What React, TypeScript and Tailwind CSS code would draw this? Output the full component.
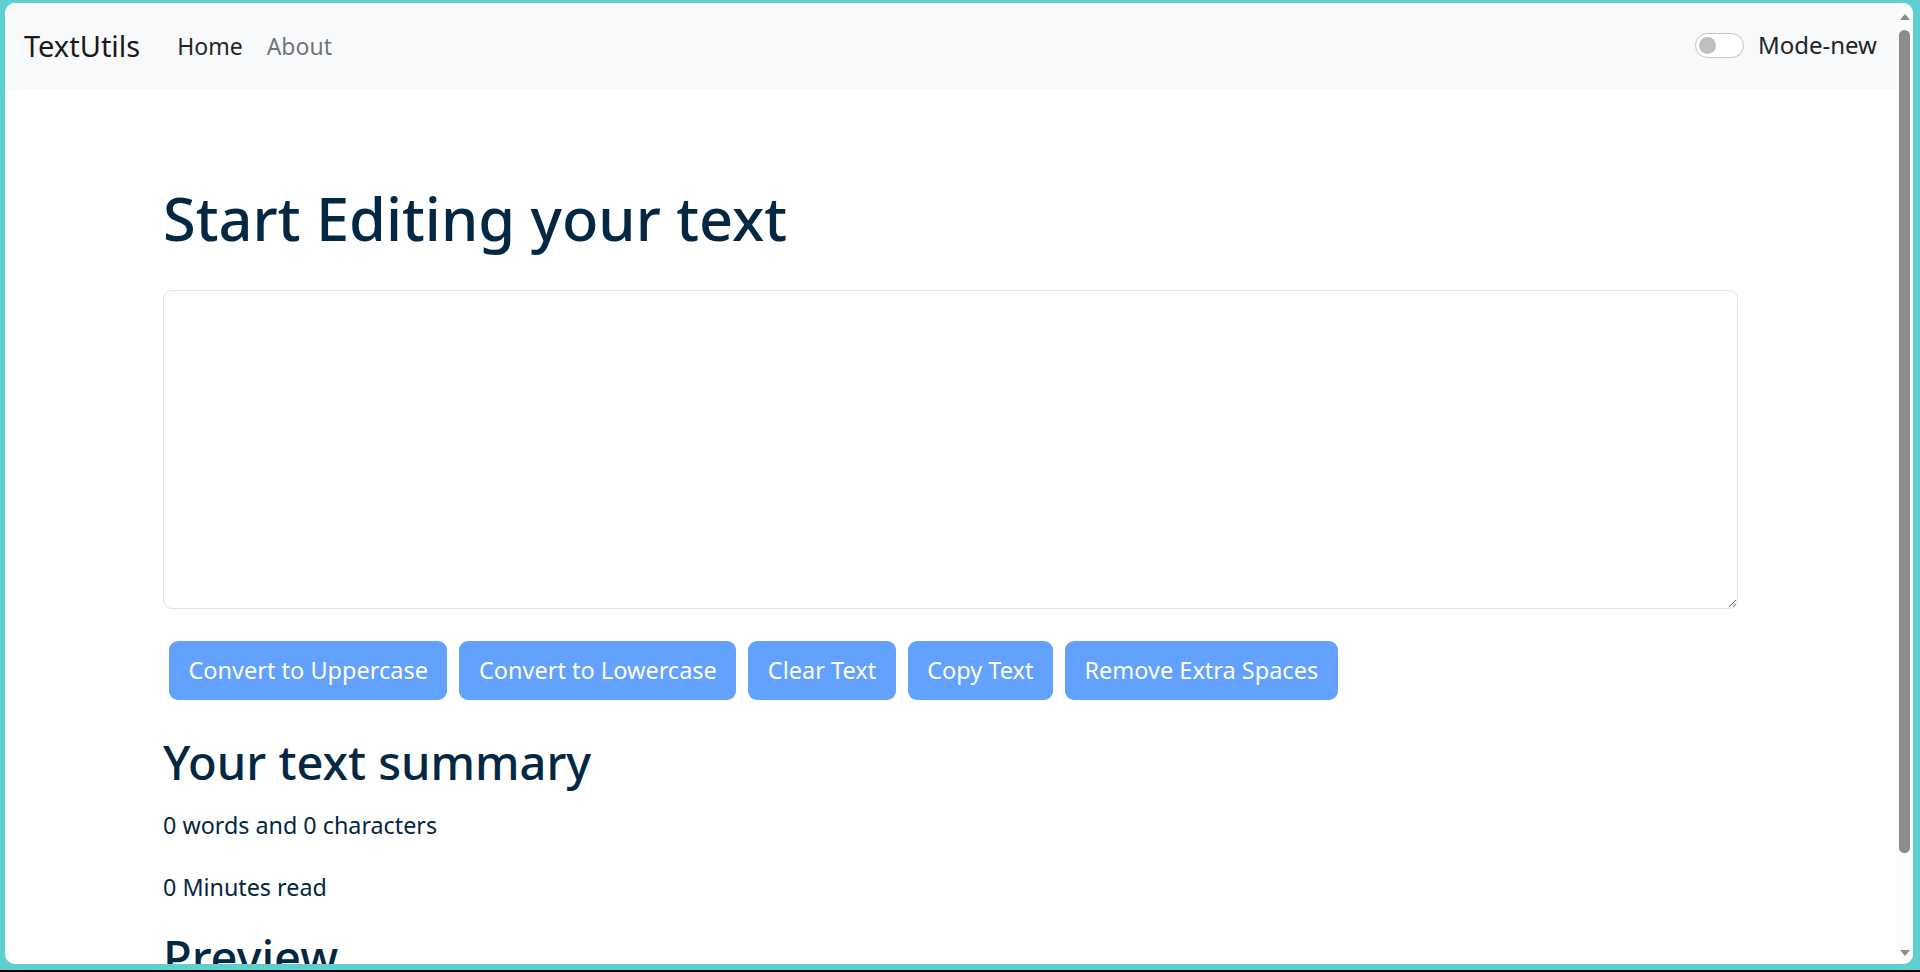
import { useState } from 'react';

const font = { fontFamily: '"Noto Sans", "Open Sans", sans-serif' };

const buttons = [
  'Convert to Uppercase',
  'Convert to Lowercase',
  'Clear Text',
  'Copy Text',
  'Remove Extra Spaces',
];

function Navbar() {
  return (
    <nav className="h-[86px] shrink-0 bg-[#f8f9fa] flex items-center pl-[19px] pr-[19px]">
      <span className="text-[29px] text-[#1a1a1a] mr-[25px]">TextUtils</span>
      <span className="text-[23px] text-[#212529] px-[12px]">Home</span>
      <span className="text-[23px] text-[#212529a6] px-[12px]">About</span>
      <div className="ml-auto flex items-center gap-[14px] -mt-[2px]">
        <div className="w-[49px] h-[25px] rounded-full border border-[#c4c4c4] bg-white flex items-center px-[3px]">
          <div className="w-[17px] h-[17px] rounded-full bg-[#bfbfbf]" />
        </div>
        <span className="text-[24px] text-[#212529]">Mode-new</span>
      </div>
    </nav>
  );
}

function Scrollbar() {
  return (
    <div className="w-[17px] shrink-0 bg-[#fbfbfb] flex flex-col items-center">
      <div className="h-[27px] flex items-center justify-center">
        <div className="w-0 h-0 border-l-[5px] border-r-[5px] border-b-[6px] border-l-transparent border-r-transparent border-b-[#8b8b8b]" />
      </div>
      <div className="w-[11px] h-[823px] rounded-full bg-[#8b8b8b]" />
      <div className="flex-1 flex items-end justify-center pb-[8px]">
        <div className="w-0 h-0 border-l-[5px] border-r-[5px] border-t-[6px] border-l-transparent border-r-transparent border-t-[#8b8b8b]" />
      </div>
    </div>
  );
}

export default function App() {
  const [text, setText] = useState('');
  const words = text.split(/\s+/).filter((w) => w.length !== 0).length;

  return (
    <div className="w-[1920px] h-[972px] bg-[#5ecfcf] overflow-hidden flex flex-col" style={font}>
      <div className="flex-1 ml-[5px] mr-[7px] mt-[3px] mb-[6px] bg-white rounded-[10px] overflow-hidden flex">
        <div className="flex-1 flex flex-col overflow-hidden">
          <Navbar />
          <div className="w-[1575px] mx-auto text-[#042743]">
            <h1 className="text-[59.5px] font-medium leading-[1.2] mt-[93px] mb-[37px]">
              Start Editing your text
            </h1>
            <textarea
              className="block w-full h-[319px] border border-[#dee2e6] rounded-[9px] bg-white outline-none px-[18px] py-[9px] text-[24px]"
              value={text}
              onChange={(e) => setText(e.target.value)}
            />
            <div className="flex gap-[12px] pl-[6px] mt-[32px]">
              {buttons.map((label) => (
                <button
                  key={label}
                  disabled={text.length === 0}
                  className="h-[59px] px-[19.5px] rounded-[9px] bg-[#62a1fe] text-white text-[23.5px]"
                >
                  {label}
                </button>
              ))}
            </div>
            <h2 className="text-[47px] font-medium leading-[1.2] mt-[34px] mb-[16px]">Your text summary</h2>
            <p className="text-[23.3px] leading-[36px] mb-[26px]">
              {words} words and {text.length} characters
            </p>
            <p className="text-[23.3px] leading-[36px] mb-[24px]">{0.008 * words} Minutes read</p>
            <h2 className="text-[47px] font-medium leading-[1.2]">Preview</h2>
          </div>
        </div>
        <Scrollbar />
      </div>
      <div className="h-[2px] bg-black" />
    </div>
  );
}
